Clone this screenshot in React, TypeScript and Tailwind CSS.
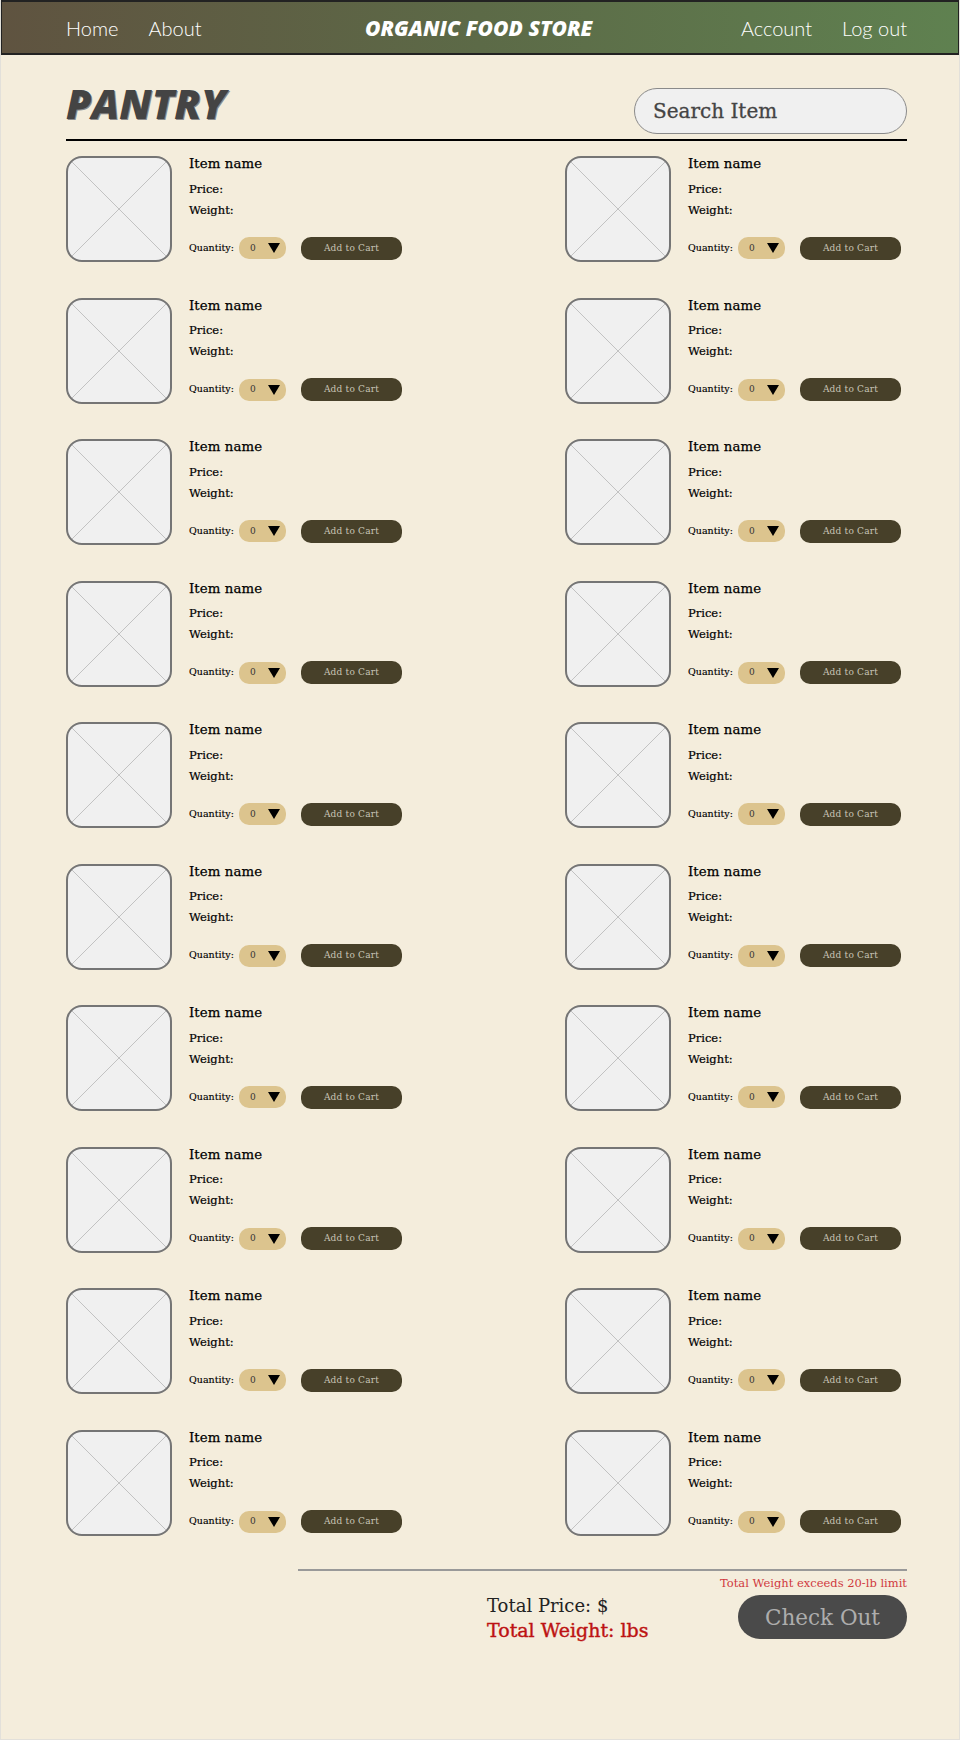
const slab = "font-['DejaVu_Serif','Liberation_Serif',serif]";
const items = Array.from({ length: 20 }, (_, i) => i);

function Placeholder() {
  return (
    <div className="relative w-[106px] h-[106px] shrink-0 overflow-hidden rounded-[16px] border-2 border-[#757575] bg-[#f0f0f0]">
      <svg className="absolute inset-0 w-full h-full" viewBox="0 0 102 102">
        <path d="M0 0L102 102M102 0L0 102" stroke="#c2c2c2" strokeWidth="1" fill="none" />
      </svg>
    </div>
  );
}

function ItemCard() {
  return (
    <div className="flex h-[106px]">
      <Placeholder />
      <div className={`ml-[17px] flex flex-col text-black ${slab}`}>
        <div className="text-[13.3px] leading-[16px] tracking-[0.1px] [-webkit-text-stroke:0.25px_#000]">Item name</div>
        <div className="mt-[6.5px] text-[11.5px] leading-[21px] [-webkit-text-stroke:0.2px_#000]">Price:</div>
        <div className="text-[11.5px] leading-[21px] [-webkit-text-stroke:0.2px_#000]">Weight:</div>
        <div className="mt-[16.5px] flex items-center h-[22px]">
          <span className="text-[9.5px] w-[50px] [-webkit-text-stroke:0.15px_#000]">Quantity:</span>
          <div className="flex items-center h-[22px] w-[47px] rounded-[10px] bg-[#dcc48e] pl-[11px]">
            <span className="pt-[1px] text-[9px] text-[#333]">0</span>
            <svg className="ml-[12px]" width="12" height="10" viewBox="0 0 12 10">
              <path d="M0 0H12L6 10Z" fill="#000" />
            </svg>
          </div>
          <button className="ml-[15px] h-[23px] w-[101px] rounded-[10px] bg-[#474029] pt-[1px] text-[9px] tracking-[0.2px] text-[#c9c5b7]">
            Add to Cart
          </button>
        </div>
      </div>
    </div>
  );
}

export default function App() {
  return (
    <div className="w-[960px] h-[1740px] overflow-hidden border border-t-0 border-[#e2e0da] bg-[#f4eddc]">
      <header className="relative h-[55px] -mx-px flex items-center justify-between border-2 border-[#222] bg-gradient-to-r from-[#5f5340] via-[#5c6a47] to-[#5f8150] pl-[64px] pr-[51px]">
        <nav className="flex gap-[30px] font-['Lato',sans-serif] font-light text-[20px] text-white">
          <span>Home</span>
          <span>About</span>
        </nav>
        <div className="absolute left-[363px] font-['Open_Sans',sans-serif] font-extrabold italic text-[21px] leading-[28px] text-white">ORGANIC FOOD STORE</div>
        <nav className="flex gap-[30px] font-['Lato',sans-serif] font-light text-[20px] text-white">
          <span>Account</span>
          <span>Log out</span>
        </nav>
      </header>

      <main className="pl-[65px] pr-[52px]">
        <div className="flex items-end justify-between h-[86px] pb-[5px] border-b-2 border-black">
          <h1 className="font-['Open_Sans',sans-serif] font-extrabold italic text-[41px] leading-[60px] mb-[1px] text-[#444] [text-shadow:1px_1px_0_#8a8a8a]">PANTRY</h1>
          <div className={`flex items-center w-[273px] h-[46px] rounded-[23px] border border-[#8a8a8a] bg-[#f0f0f0] pl-[18px] text-[20px] text-[#444] [-webkit-text-stroke:0.3px_#444] ${slab}`}>
            Search Item
          </div>
        </div>

        <div className="mt-[15px] grid grid-cols-[499px_1fr] gap-y-[35.5px]">
          {items.map((i) => (
            <ItemCard key={i} />
          ))}
        </div>

        <div className="mt-[33px] ml-[232px] border-t-2 border-[#999]">
          <div className={`mt-[4px] text-right text-[11.5px] leading-[16px] text-[#d0393e] ${slab}`}>Total Weight exceeds 20-lb limit</div>
          <div className="mt-[4px] flex justify-between">
            <div className={`ml-[189px] -mt-[2px] leading-[25px] ${slab}`}>
              <div className="text-[18px] text-[#222]">Total Price: $</div>
              <div className="text-[19px] text-[#bd1313] [-webkit-text-stroke:0.4px_#bd1313]">Total Weight: lbs</div>
            </div>
            <button className={`w-[169px] h-[44px] rounded-[22px] bg-[#4a4a4a] pt-[3px] text-[21.5px] text-[#adadad] ${slab}`}>Check Out</button>
          </div>
        </div>
      </main>
    </div>
  );
}
